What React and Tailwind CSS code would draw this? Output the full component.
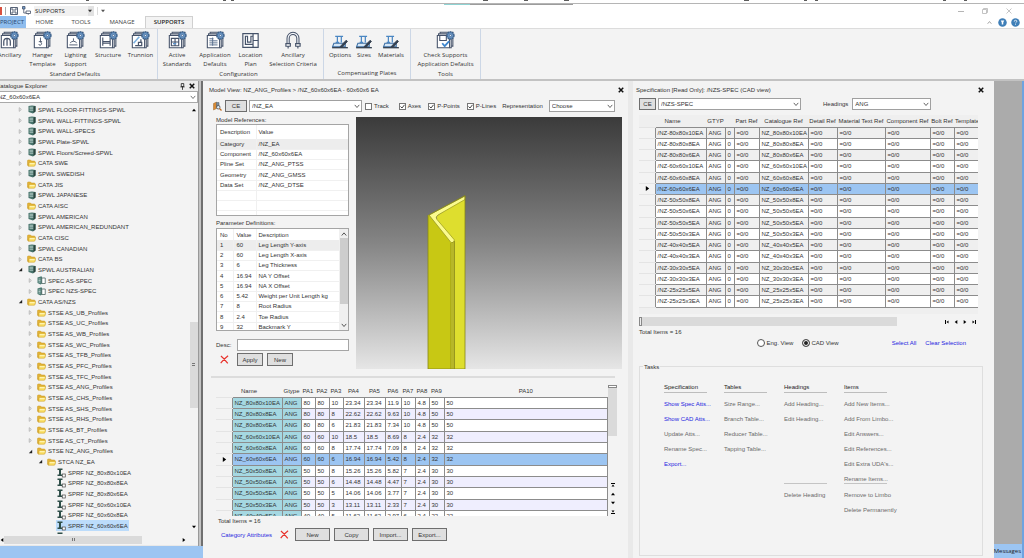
import React, { useState } from "react";
import clsx from "clsx";

const SIZES = [
  "80x80x10", "80x80x8", "80x80x6", "60x60x10", "60x60x8", "60x60x6", "50x50x8", "50x50x6",
  "50x50x5", "50x50x3", "40x40x5", "40x40x3", "30x30x5", "30x30x3", "25x25x5", "25x25x3",
];

const PARAM_ROWS = [
  ["80", "80", "10", "23.34", "23.34", "11.9", "10", "4.8", "50", "50"],
  ["80", "80", "8", "22.62", "22.62", "9.63", "10", "4.8", "50", "50"],
  ["80", "80", "6", "21.83", "21.83", "7.34", "10", "4.8", "50", "50"],
  ["60", "60", "10", "18.5", "18.5", "8.69", "8", "2.4", "32", "32"],
  ["60", "60", "8", "17.74", "17.74", "7.09", "8", "2.4", "32", "32"],
  ["60", "60", "6", "16.94", "16.94", "5.42", "8", "2.4", "32", "32"],
  ["50", "50", "8", "15.26", "15.26", "5.82", "7", "2.4", "30", "30"],
  ["50", "50", "6", "14.48", "14.48", "4.47", "7", "2.4", "30", "30"],
  ["50", "50", "5", "14.06", "14.06", "3.77", "7", "2.4", "30", "30"],
  ["50", "50", "3", "13.11", "13.11", "2.33", "7", "2.4", "30", "30"],
  ["40", "40", "5", "11.62", "11.62", "2.97", "6", "2.4", "22", "22"],
];

const PROFILES = ["UB", "UC", "WB", "WC", "TFB", "PFC", "TFC", "ANG", "CHS", "SHS", "RHS", "BT", "CT"];

const TREE = [
  { level: 0, icon: "world", label: "SPWL FLOOR-FITTINGS-SPWL" },
  { level: 0, icon: "world", label: "SPWL WALL-FITTINGS-SPWL" },
  { level: 0, icon: "world", label: "SPWL WALL-SPECS" },
  { level: 0, icon: "world", label: "SPWL Plate-SPWL" },
  { level: 0, icon: "world", label: "SPWL Floors/Screed-SPWL" },
  { level: 0, icon: "folder", label: "CATA SWE" },
  { level: 0, icon: "world", label: "SPWL SWEDISH" },
  { level: 0, icon: "folder", label: "CATA JIS" },
  { level: 0, icon: "world", label: "SPWL JAPANESE" },
  { level: 0, icon: "folder", label: "CATA AISC" },
  { level: 0, icon: "world", label: "SPWL AMERICAN" },
  { level: 0, icon: "world", label: "SPWL AMERICAN_REDUNDANT" },
  { level: 0, icon: "folder", label: "CATA CISC" },
  { level: 0, icon: "world", label: "SPWL CANADIAN" },
  { level: 0, icon: "folder", label: "CATA BS" },
  { level: 0, icon: "world", label: "SPWL AUSTRALIAN", open: true },
  { level: 1, icon: "spec", label: "SPEC AS-SPEC" },
  { level: 1, icon: "spec", label: "SPEC NZS-SPEC" },
  { level: 0, icon: "folder", label: "CATA AS/NZS", open: true },
  ...PROFILES.map((p) => ({ level: 1, icon: "folder", label: `STSE AS_${p}_Profiles` })),
  { level: 1, icon: "folder", label: "STSE NZ_ANG_Profiles", open: true },
  { level: 2, icon: "folder", label: "STCA NZ_EA", open: true },
  ...SIZES.slice(0, 7).map((s) => ({ level: 3, icon: "profile", label: `SPRF NZ_${s}EA`, leaf: true })),
];

const INDENT = ["pl-[18px]", "pl-7", "pl-[38px]", "pl-12"];

/* ---------- small icons ---------- */

const Triangle = ({ dir = "right", className = "size-[5px]" }) => {
  const paths = {
    right: "M1 0 5 3 1 6Z",
    left: "M5 0 1 3 5 6Z",
    up: "M0 5 3 1 6 5Z",
    down: "M0 1 3 5 6 1Z",
  };
  return (
    <svg viewBox="0 0 6 6" className={className} fill="currentColor">
      <path d={paths[dir]} />
    </svg>
  );
};

const Chevron = ({ up, className = "size-[6px]" }) => (
  <svg viewBox="0 0 8 8" className={className} fill="none" stroke="currentColor" strokeWidth="1.2">
    <path d={up ? "M1 6 4 2.5 7 6" : "M1 2.5 4 6 7 2.5"} />
  </svg>
);

const CloseIcon = () => (
  <svg viewBox="0 0 8 8" className="size-[6px]" stroke="#111" strokeWidth="2">
    <path d="M1 1 7 7M7 1 1 7" />
  </svg>
);

const RedCross = ({ className }) => (
  <svg viewBox="0 0 10 10" className={className} fill="none" stroke="#e8322c" strokeWidth="1.4">
    <path d="M1 1.2C4 3.5 6 6 8.6 9.2M9 .8C6 3 3.5 6 .8 9" />
  </svg>
);

const FolderIcon = () => (
  <svg viewBox="0 0 18 16" className="h-2 w-[9px]">
    <path d="M1 12V3.5Q1 2 2.5 2H7l2 2h5.500q1.500 0 1.500 1.500V12Z" fill="#e3b33a" stroke="#c99a22" />
    <path d="M3 14.500 4.200 6.500h13L16 13q-.3 1.500-2 1.500H4q-2 0-2.500-2.500Z" fill="#f9dd62" stroke="#c99a22" />
    <path d="M5.500 8h10l-.5 2.500H5Z" fill="#fff3b0" />
  </svg>
);

const WorldIcon = () => (
  <svg viewBox="0 0 16 18" className="h-[9px] w-2">
    <path d="M1 2 8 1l7 1v11l-5 4-9-3Z" fill="#47736b" />
    <path d="M3 4.5h8M3 7.5h8M3 10.5h8" stroke="#d5e6e2" strokeWidth="1.4" />
    <path d="M11 3v13l4-3V2Z" fill="#2b443f" />
  </svg>
);

const SpecIcon = () => (
  <svg viewBox="0 0 18 18" className="size-[9px]">
    <path d="M1 3 7 1h3v14l-3 2-6-3Z" fill="#4c7b73" />
    <path d="M3 6h4M3 9h4M3 12h4" stroke="#e2efec" strokeWidth="1.3" />
    <path d="M9.5 4h7v11h-7Z" fill="#fff" stroke="#3a5550" strokeWidth="1.4" />
  </svg>
);

const ProfileIcon = () => (
  <svg viewBox="0 0 18 20" className="h-[10px] w-[9px]">
    <path d="M1 1h10v3H8v9h3v3H1v-3h3V4H1Z" fill="#2f4f49" />
    <rect x="10.5" y="12" width="6" height="6" fill="#fff" stroke="#444" strokeWidth="1.4" />
  </svg>
);

const TREE_ICONS = { folder: FolderIcon, world: WorldIcon, spec: SpecIcon, profile: ProfileIcon };

/* ---------- ribbon icons ---------- */

const Gear = () => (
  <g>
    <circle cx="17.5" cy="5.5" r="4.3" fill="#7fa9d4" stroke="#3b5f88" strokeWidth="1.8" strokeDasharray="1.9 .8" />
    <circle cx="17.5" cy="5.5" r="3.6" fill="#6f9ccc" stroke="#3b5f88" strokeWidth=".8" />
    <circle cx="17.5" cy="5.5" r="1.3" fill="#e4eefa" stroke="#2d4d73" strokeWidth=".7" />
  </g>
);

const StackIcon = ({ children }) => (
  <svg viewBox="0 0 23 22" className="h-[18px] w-[19px]" fill="none" stroke="#46536a" strokeWidth="1.3">
    <path d="M5 3.5V1.5h15.5v17h-2" />
    <path d="M3 5.5v-2h15.5v17H16.5" fill="#fff" />
    <path d="M1.5 5.5h15v15h-15Z" fill="#fff" />
    {children}
    <Gear />
  </svg>
);

const PlateIcon = () => (
  <svg viewBox="0 0 20 16" className="h-[14px] w-[18px]" fill="none">
    <path d="M3 9.5h13v4H1.5l1.5-4Z" fill="#d5e7f7" stroke="#3c6fa5" strokeWidth="1.2" />
    <path d="M4.5 1.5h9M7 1.5v7M11.5 1.5v7M5 8.500h4" stroke="#4a86c2" strokeWidth="1.4" />
    <path d="M10 13.500 17 6l1.500 1.300-6 6.700Z" fill="#333f4f" stroke="#333f4f" />
    <path d="M1 14.500h18" stroke="#333f4f" strokeWidth="1.500" />
  </svg>
);

const RIBBON = [
  {
    title: "Standard Defaults",
    className: "-ml-[7px]",
    items: [
      {
        lines: ["Ancillary"], width: "w-[33px]",
        icon: <StackIcon><path d="M4.500 18v-5q0-4 4-4t4 4v5M8.500 9v9" strokeWidth="1.500" /></StackIcon>,
      },
      {
        lines: ["Hanger", "Template"], width: "w-[33px]",
        icon: <StackIcon><path d="M9 8v5M7 13h4M9 13q3 3 0 4.500-2 0-2-1.500" strokeWidth="1.100" /></StackIcon>,
      },
      {
        lines: ["Lighting", "Support"], width: "w-[33px]",
        icon: <StackIcon><path d="M4 17h10M5 14.500q4-4 8 0M9 9v3" strokeWidth="1.100" /></StackIcon>,
      },
      {
        lines: ["Structure"], width: "w-8",
        icon: <StackIcon><path d="M4.500 8v10M13.500 8v10M4.500 13h9M4.500 15h9" strokeWidth="1.400" /></StackIcon>,
      },
      {
        lines: ["Trunnion"], width: "w-[33px]",
        icon: <StackIcon><path d="M3 15 10 7" stroke="#7bb0df" strokeWidth="2" /><path d="M5 18h8v-4H9v4M12 10v4" strokeWidth="1.500" /></StackIcon>,
      },
    ],
  },
  {
    title: "Configuration",
    className: "pr-1",
    items: [
      {
        lines: ["Active", "Standards"], width: "w-[38px]",
        icon: <StackIcon><path d="M4 9h9v9H4ZM8.500 9v9M4 13.500h9" strokeWidth="1.400" /><path d="M6 15.500h4" stroke="#5b93cc" strokeWidth="1.600" /></StackIcon>,
      },
      {
        lines: ["Application", "Defaults"], width: "w-[38px]",
        icon: <StackIcon><path d="M4 9.500h5M4 12h10M4 14.500h10M4 17h10M8 8v10" stroke="#5d7391" strokeWidth="1.200" /></StackIcon>,
      },
      {
        lines: ["Location", "Plan"], width: "w-[33px]",
        icon: (
          <svg viewBox="0 0 22 20" className="h-[17px] w-[19px]" fill="none" stroke="#46536a" strokeWidth="1.400">
            <path d="M2 2h18v16H2Z" fill="#fff" />
            <path d="M5 5h2.500v7h4V5H14v9.500H5ZM14 10h6M14 2v3M14 14v4" />
          </svg>
        ),
      },
      {
        lines: ["Ancillary", "Selection Criteria"], width: "w-[52px]",
        icon: (
          <svg viewBox="0 0 18 20" className="h-[18px] w-4" fill="none" stroke="#46536a" strokeWidth="1.300">
            <path d="M3.500 15V8a5.500 5.500 0 0 1 11 0v7" strokeWidth="3.600" />
            <path d="M3.500 15V8a5.500 5.500 0 0 1 11 0v7" stroke="#f4f6fa" strokeWidth="1.300" />
            <path d="M1 14h5v3H1ZM12 14h5v3h-5ZM3.500 17v2.500M14.500 17v2.500" fill="#fff" />
          </svg>
        ),
      },
    ],
  },
  {
    title: "Compensating Plates",
    className: "px-1",
    items: [
      { lines: ["Options"], width: "w-6", icon: <PlateIcon /> },
      { lines: ["Sizes"], width: "w-6", icon: <PlateIcon /> },
      { lines: ["Materials"], width: "w-[30px]", icon: <PlateIcon /> },
    ],
  },
  {
    title: "Tools",
    className: "",
    items: [
      {
        lines: ["Check Supports", "Application Defaults"], width: "w-[69px]",
        icon: <StackIcon><path d="M4.500 5.500v6h8v-6" /><path d="m7.500 15 3 3.500 5.500-6" stroke="#3d86cf" strokeWidth="2.200" /></StackIcon>,
      },
    ],
  },
];

/* ---------- form controls ---------- */

const Select = ({ label, options, className }) => (
  <div className={clsx("relative h-3", className)}>
    <select aria-label={label} className="h-full w-full appearance-none border border-[#a0a0a0] bg-white pl-[2px] leading-[10px] outline-none">
      {options.map((o) => <option key={o}>{o}</option>)}
    </select>
    <Chevron className="pointer-events-none absolute top-[3px] right-[2px] size-[6px] text-[#555]" />
  </div>
);

const Check = ({ label, defaultChecked, className }) => (
  <label className={clsx("flex items-center gap-[2px] whitespace-nowrap", className)}>
    <span className="relative block size-[7px]">
      <input type="checkbox" defaultChecked={defaultChecked} className="peer block size-[7px] appearance-none border border-[#777] bg-white" />
      <svg viewBox="0 0 7 7" className="pointer-events-none absolute inset-0 hidden size-[7px] peer-checked:block" fill="none" stroke="#444">
        <path d="m1.500 3.500 1.500 1.500 2.500-3.200" />
      </svg>
    </span>
    {label}
  </label>
);

const Button = ({ children, className }) => (
  <button className={clsx("border border-[#6e6e6e] bg-[#dfdfdf] hover:bg-[#e8f1fb]", className)}>{children}</button>
);

/* ---------- header ---------- */

const TitleBar = () => (
  <div className="bg-white">
    <svg viewBox="0 0 1024 3" preserveAspectRatio="none" className="block h-[3px] w-full" stroke="#333" strokeWidth="2">
      <path d="M86 0h3M223 0h3M231 0h3M483 0h5M524 0h4M564 0h5M744 0h5M804 0h3M815 0h3M943 0h3M964 0h3" strokeOpacity=".8" />
    </svg>
    <div className="relative h-[2px] border-t border-[#b5b5b5]">
      <div className="absolute top-0 left-[444px] flex h-px w-[129px] bg-[#9c9c9c]">
        <div className="w-[26px] bg-[#8fd3d3]" />
      </div>
    </div>
    <div className="flex h-[11px] items-center font-['Open_Sans',sans-serif]">
      <span className="h-2 w-[2px] bg-[#d8503f]" />
      <span className="mr-1 ml-[3px] h-2 w-px bg-[#aaa]" />
      <svg viewBox="0 0 16 16" className="size-[8px]" fill="none" stroke="#46536a" strokeWidth="1.800">
        <path d="M1 1h14v14H1ZM4 1v5h8V1M4 15v-5h8v5" />
      </svg>
      <svg viewBox="0 0 18 18" className="mr-[3px] ml-[4px] size-[9px]" fill="none" stroke="#46536a" strokeWidth="1.600">
        <path d="M1 1h5v5H1Z" fill="#6f9ccc" />
        <path d="M3.500 6v8h5M8 10h9v5H8ZM12.500 15v2.500" />
      </svg>
      <div className="flex h-[10px] w-[60px] items-center justify-between bg-[#f1f1f1] pl-px text-[6px] leading-[10px] text-[#222]">
        SUPPORTS
        <span className="flex h-full w-[6px] items-center bg-[#e2e2e2] text-[#333]"><Triangle dir="down" className="size-[4px]" /></span>
      </div>
      <span className="mx-[3px] h-2 w-px bg-[#ddd]" />
      <Triangle dir="down" className="size-[4px] text-[#555]" />
      <div className="mr-[12px] ml-auto flex items-center gap-[18px] text-[#b5b5b5]">
        <button aria-label="Minimize"><svg viewBox="0 0 6 6" className="size-[6px]" stroke="currentColor"><path d="M0 3.500h6" /></svg></button>
        <button aria-label="Restore">
          <svg viewBox="0 0 6 6" className="size-[6px]" fill="none" stroke="currentColor" strokeWidth=".8"><path d="M.5 1.500h4v4h-4ZM1.500 1.500v-1h4v4h-1" /></svg>
        </button>
        <button aria-label="Close"><svg viewBox="0 0 6 6" className="size-[6px]" stroke="currentColor" strokeWidth=".8"><path d="M.5.5l5 5M5.500.5l-5 5" /></svg></button>
      </div>
    </div>
  </div>
);

const Tabs = () => (
  <nav className="flex h-3 items-stretch bg-white font-['Open_Sans',sans-serif] text-[6px] leading-3 text-[#444]">
    <button className="w-[26px] bg-[#8fbdee] pr-[3px] text-[#2a4a70]">PROJECT</button>
    <button className="w-[37px]">HOME</button>
    <button className="w-9">TOOLS</button>
    <button className="w-[46px]">MANAGE</button>
    <button className="w-12 border border-b-0 border-[#d0d0d0] bg-[#f3f3f3] font-semibold text-[#222] leading-[11px]">SUPPORTS</button>
    <div className="mr-1 ml-auto flex items-center gap-1">
      <Chevron up className="size-[5px] text-[#888]" />
      <svg viewBox="0 0 18 18" className="ml-[2px] size-[9px]">
        <circle cx="9" cy="9" r="8.500" fill="#3f7fb8" />
        <path d="M5.500 5h7l-2 4v4h-3V9Z" fill="#fff" />
      </svg>
      <svg viewBox="0 0 18 18" className="size-[9px]" fill="none">
        <circle cx="9" cy="9" r="8.500" fill="#3f7fb8" />
        <path d="M6.500 7.200Q6.500 4.500 9 4.500t2.500 2.300Q11.500 8.300 9 9.800M9 11.500v2" stroke="#fff" strokeWidth="1.600" />
      </svg>
    </div>
  </nav>
);

const Ribbon = () => (
  <div className="flex h-[53px] border-t border-b-2 border-t-[#dcdcdc] border-b-[#c2c2c2] bg-[#f3f3f3] font-['Open_Sans',sans-serif] text-[6px] leading-[9px] text-[#333]">
    {RIBBON.map((group) => (
      <section key={group.title} className={clsx("flex flex-col justify-between border-r border-[#ccd7e6] pt-[2px]", group.className)}>
        <div className="flex">
          {group.items.map((item) => (
            <button key={item.lines.join(" ")} className={clsx("flex flex-col items-center whitespace-nowrap", item.width)}>
              <span className="flex h-[18px] items-end">{item.icon}</span>
              <span className="mt-[2px] flex flex-col items-center">
                {item.lines.map((l) => <span key={l}>{l}</span>)}
              </span>
            </button>
          ))}
        </div>
        <div className="text-center leading-[11px]">{group.title}</div>
      </section>
    ))}
  </div>
);

/* ---------- left panel ---------- */

const CatalogueExplorer = () => (
  <aside className="flex min-h-0 min-w-0 flex-col bg-[#f3f3f3]">
    <div className="flex h-[10px] items-center bg-[#ececec] pr-[3px] leading-[10px]">
      <h2 className="-ml-1 flex-1">Catalogue Explorer</h2>
      <svg viewBox="0 0 6 8" className="mr-1 h-[7px] w-[5px]" fill="none" stroke="#222"><path d="M1.500.5h3v3.500h-3ZM.5 4.500h5M3 4.500V8" /></svg>
      <CloseIcon />
    </div>
    <div className="relative">
      <select aria-label="Current element" className="block h-3 w-full appearance-none border border-[#a9a9a9] border-l-0 bg-white leading-[10px] indent-[-2px] outline-none">
        <option>NZ_60x60x6EA</option>
      </select>
      <Chevron className="pointer-events-none absolute top-[3px] right-[2px] size-[6px] text-[#666]" />
    </div>
    <div className="flex min-h-0 flex-1">
      <ul className="min-w-0 flex-1 overflow-hidden pt-px">
        {TREE.map((node) => {
          const Icon = TREE_ICONS[node.icon];
          const selected = node.label === "SPRF NZ_60x60x6EA";
          return (
            <li key={node.label} className={clsx("flex h-[11px] items-center nth-[3n]:h-[10px]", INDENT[node.level])}>
              <span className="w-2 shrink-0">
                {!node.leaf && (node.open
                  ? <svg viewBox="0 0 6 6" className="size-[5px]"><path d="M5 1v4H1Z" fill="#222" /></svg>
                  : <svg viewBox="0 0 6 6" className="size-[5px]" fill="none" stroke="#b0b0b0"><path d="M1.500.8 4 3 1.500 5.200Z" /></svg>)}
              </span>
              <span className={clsx("flex h-full items-center whitespace-nowrap pr-px", selected && "bg-[#bcdcfb]")}>
                <span className="flex w-[11px] justify-center"><Icon /></span>
                <span className="ml-px">{node.label}</span>
              </span>
            </li>
          );
        })}
      </ul>
      <div className="flex w-[9px] flex-col items-center justify-between py-[5px]">
        <Triangle dir="up" className="size-[4px] text-black" />
        <div className="mt-[92px] flex h-[86px] w-2 items-center justify-center bg-[#dadada]">
          <span className="h-[3px] w-[3px] border-y border-[#777]" />
        </div>
        <Triangle dir="down" className="size-[4px] text-black" />
      </div>
    </div>
    <div className="flex h-[11px] items-center pr-[12px] leading-none">
      <span className="w-[4px]"><Triangle dir="left" className="size-[4px] text-black" /></span>
      <div className="flex h-2 w-[138px] items-center justify-center bg-[#dadada]">
        <span className="h-[3px] w-[3px] border-x border-[#777]" />
      </div>
      <Triangle className="ml-auto size-[4px] text-black" />
    </div>
    <div className="-mr-[5px] h-[13px] border-t border-[#e8e8e8] bg-[#9cc5f2]" />
  </aside>
);

/* ---------- model view ---------- */

const ModelReferences = () => (
  <div className="h-[92px] overflow-hidden border border-[#a5a5a5] bg-white">
    <table className="w-full table-fixed border-collapse text-left">
      <colgroup><col className="w-[39px]" /><col /></colgroup>
      <thead>
        <tr className="h-[14px]">
          <th className="border-r border-[#f0f0f0] pl-[3px] font-normal">Description</th>
          <th className="pl-[2px] font-normal">Value</th>
        </tr>
      </thead>
      <tbody>
        {[
          ["Category", "/NZ_EA"], ["Component", "/NZ_60x60x6EA"], ["Pline Set", "/NZ_ANG_PTSS"],
          ["Geometry", "/NZ_ANG_GMSS"], ["Data Set", "/NZ_ANG_DTSE"], ["", ""], ["", ""], ["", ""],
        ].map(([name, value], i) => (
          <tr key={i} className="h-[10px] border-b border-[#f0f0f0] first:bg-[#ededed] nth-[4n]:h-[11px]">
            <td className="border-r border-[#f0f0f0] pl-[3px]">{name}</td>
            <td className="pl-[2px]">{value}</td>
          </tr>
        ))}
      </tbody>
    </table>
  </div>
);

const ParameterDefinitions = () => (
  <div className="flex h-[103px] overflow-hidden border border-[#a5a5a5] bg-white">
    <table className="w-full table-fixed self-start border-collapse text-left">
      <colgroup><col className="w-4" /><col className="w-[23px]" /><col /></colgroup>
      <thead>
        <tr className="h-[11px]">
          <th className="border-r border-[#f0f0f0] pl-[3px] font-normal">No</th>
          <th className="border-r border-[#f0f0f0] pl-[3px] font-normal">Value</th>
          <th className="pl-[2px] font-normal">Description</th>
        </tr>
      </thead>
      <tbody>
        {[
          ["60", "Leg Length Y-axis"], ["60", "Leg Length X-axis"], ["6", "Leg Thickness"], ["16.94", "NA Y Offset"],
          ["16.94", "NA X Offset"], ["5.42", "Weight per Unit Length kg"], ["8", "Root Radius"], ["2.4", "Toe Radius"], ["32", "Backmark Y"],
        ].map(([value, desc], i) => (
          <tr key={desc} className="h-[10px] border-b border-[#f0f0f0] first:bg-[#ededed] nth-[4n]:h-[11px]">
            <td className="border-r border-[#f0f0f0] pl-[3px]">{i + 1}</td>
            <td className="border-r border-[#f0f0f0] pl-[3px]">{value}</td>
            <td className="whitespace-nowrap pl-[2px]">{desc}</td>
          </tr>
        ))}
      </tbody>
    </table>
    <div className="flex w-[9px] shrink-0 flex-col items-center bg-[#f0f0f0] py-[2px] text-[#444]">
      <Chevron up className="size-[6px]" />
      <div className="mt-px h-[66px] w-2 bg-[#cdcdcd]" />
      <Chevron className="mt-auto size-[6px]" />
    </div>
  </div>
);

const Viewer = () => (
  <div className="min-w-0 flex-1 bg-gradient-to-b from-[#3b3b3b] via-[#858585] to-[#e6e6e6]">
    <svg viewBox="0 0 266 252" className="block h-[252px] w-full">
      <path d="M73 98 95 125V252H72V98Z" fill="#c8c814" />
      <path d="M109 80V252H98V124L81 104V99Z" fill="#dede2e" />
      <path d="M95 124h3.500V252H95Z" fill="#d8d832" />
      <path d="M73 98 109 79v3.500L82 98q-3 2-1 4.500L98.500 123l-1.500 2.500-2 0Z" fill="#fbfb8e" stroke="#96961a" strokeWidth=".7" />
      <path d="M73 98 109 78.500V252M72 98V252M95 126V252M97 125V252M98.500 124V252M72 252h37" fill="none" stroke="#85851a" strokeWidth=".8" />
    </svg>
  </div>
);

const PA_COLS = ["PA1", "PA2", "PA3", "PA4", "PA5", "PA6", "PA7", "PA8", "PA9", "PA10"];
const cell = "border border-[#8c8c8c] pl-[2px]";

const ParameterTable = () => {
  const [current, setCurrent] = useState(5);
  return (
    <div className="ml-[7px] flex h-[131px] overflow-hidden">
      <table className="min-w-0 flex-1 table-fixed self-start border-collapse whitespace-nowrap text-left">
        <colgroup>
          <col className="w-4" /><col className="w-[50px]" /><col className="w-[19px]" />
          <col className="w-[14px]" /><col className="w-[14px]" /><col className="w-[14px]" />
          <col className="w-[21px]" /><col className="w-[21px]" /><col className="w-4" />
          <col className="w-[14px]" /><col className="w-[14px]" /><col className="w-[15px]" /><col />
        </colgroup>
        <thead>
          <tr className="h-3 text-center">
            <th />
            <th className="pr-4 font-normal">Name</th>
            <th className="font-normal">Gtype</th>
            {PA_COLS.map((c) => <th key={c} className="font-normal">{c}</th>)}
          </tr>
        </thead>
        <tbody>
          {PARAM_ROWS.map((row, i) => (
            <tr
              key={i}
              onClick={() => setCurrent(i)}
              className={clsx("h-[11px] nth-[3n]:h-3", i === current ? "bg-[#9cc5f2]" : "bg-white even:bg-[#efeefe]")}
            >
              <td className="border-y border-[#e4e4e4] bg-[#f3f3f3] pl-[6px]">{i === current && <Triangle className="size-[5px] text-black" />}</td>
              <td className={clsx(cell, i !== current && "bg-[#a5d8e2]")}>NZ_{SIZES[i]}EA</td>
              <td className={clsx(cell, i !== current && "bg-[#a5d8e2]")}>ANG</td>
              {row.map((v, n) => <td key={n} className={cell}>{v}</td>)}
            </tr>
          ))}
        </tbody>
      </table>
      <div className="flex w-[9px] flex-col items-center text-black">
        <div className="h-[3px] w-[9px] border border-[#888] bg-white" />
        <div className="h-12 w-[9px] bg-[#dadada]" />
        <div className="mt-auto mb-[2px] flex flex-col items-center gap-[5px]">
          <Triangle dir="up" className="size-[4px] border-t border-black" />
          <Triangle dir="up" className="size-[4px]" />
          <Triangle dir="down" className="size-[4px]" />
          <Triangle dir="down" className="size-[4px] border-b border-black" />
        </div>
      </div>
    </div>
  );
};

const ModelView = () => (
  <main className="flex min-w-0 flex-col bg-[#f3f3f3] px-[6px] pt-[4px]">
    <div className="flex h-[10px] items-center justify-between">
      <h2>Model View: NZ_ANG_Profiles &gt; /NZ_60x60x6EA - 60x60x6 EA</h2>
      <button aria-label="Close model view" className="-mr-[2px]"><CloseIcon /></button>
    </div>
    <div className="mt-[5px] flex items-center pl-[3px]">
      <svg viewBox="0 0 20 20" className="size-[10px]" fill="none">
        <path d="M3 5 9 2v13l-6 3Z" fill="#d98a35" stroke="#9a6a2c" />
        <path d="M9 3h5v10H9Z" fill="#7b8ea0" stroke="#4c5a66" />
        <circle cx="12.500" cy="12.500" r="3.500" stroke="#444" strokeWidth="1.500" fill="#dcebf7" />
        <path d="m15 15 4 4" stroke="#c0691e" strokeWidth="2.500" />
      </svg>
      <Button className="ml-[3px] h-3 w-[22px]">CE</Button>
      <Select label="Category" options={["/NZ_EA"]} className="ml-[2px] w-[113px]" />
      <Check label="Track" className="ml-[3px]" />
      <div className="ml-[10px] flex items-center gap-[7px]">
        <Check label="Axes" defaultChecked />
        <Check label="P-Points" defaultChecked />
        <Check label="P-Lines" defaultChecked />
      </div>
      <span className="ml-[6px]">Representation</span>
      <Select label="Representation" options={["Choose"]} className="ml-[6px] w-[66px]" />
    </div>

    <div className="mt-[5px] flex gap-[7px] pl-[7px]">
      <div className="w-[133px] shrink-0">
        <h3 className="h-[7px] leading-[7px]">Model References:</h3>
        <ModelReferences />
        <h3 className="mt-[3px] h-[9px] leading-[9px]">Parameter Definitions:</h3>
        <ParameterDefinitions />
        <div className="mt-2 flex items-center">
          <label htmlFor="desc" className="w-[21px]">Desc:</label>
          <input id="desc" className="h-3 min-w-0 flex-1 border border-[#a5a5a5] bg-white outline-none" />
        </div>
        <div className="mt-[2px] flex items-center gap-1 pl-1">
          <button aria-label="Delete" className="mr-[4px]"><RedCross className="size-[9px]" /></button>
          <Button className="h-[13px] w-[26px]">Apply</Button>
          <Button className="h-[13px] w-[26px]">New</Button>
        </div>
      </div>
      <Viewer />
    </div>

    <hr className="mt-[7px] mr-[7px] ml-[2px] border-t-2 border-[#dcdcdc]" />
    <div className="mt-[7px] mr-[5px]"><ParameterTable /></div>
    <div className="mt-px ml-[9px] leading-[8px]">Total Items = 16</div>
    <div className="mt-[3px] flex items-center pl-3">
      <button className="text-[#2a2ae0]">Category Attributes</button>
      <button aria-label="Delete row" className="mr-[6px] ml-2"><RedCross className="size-[9px]" /></button>
      <div className="flex gap-[4px]">
        {["New", "Copy", "Import...", "Export..."].map((b) => <Button key={b} className="h-[13px] w-[35px]">{b}</Button>)}
      </div>
    </div>
  </main>
);

/* ---------- specification ---------- */

const SpecTable = () => {
  const [current, setCurrent] = useState(5);
  const ref = "=0/0";
  return (
    <table className="w-full table-fixed border-collapse whitespace-nowrap text-left">
      <colgroup>
        <col className="w-4" /><col className="w-[51px]" /><col className="w-[19px]" /><col className="w-[9px]" />
        <col className="w-[25px]" /><col className="w-[49px]" /><col className="w-[29px]" /><col className="w-12" />
        <col className="w-[45px]" /><col className="w-6" /><col />
      </colgroup>
      <thead>
        <tr className="h-3">
          <th />
          <th className="pr-4 text-center font-normal">Name</th>
          <th className="text-center font-normal">GTYP</th>
          <th />
          {["Part Ref", "Catalogue Ref", "Detail Ref", "Material Text Ref", "Component Ref", "Bolt Ref"].map((h) => (
            <th key={h} className="text-center font-normal">{h}</th>
          ))}
          <th className="pl-px font-normal">Template</th>
        </tr>
      </thead>
      <tbody>
        {SIZES.map((s, i) => (
          <tr
            key={s}
            onClick={() => setCurrent(i)}
            className={clsx("h-[11px] nth-[4n]:h-3", i === current ? "bg-[#9cc5f2]" : "bg-[#efefef] even:bg-white")}
          >
            <td className="border-y border-[#e4e4e4] bg-[#f3f3f3] pl-[6px]">{i === current && <Triangle className="size-[5px] text-black" />}</td>
            <td className={cell}>/NZ-{s}EA</td>
            <td className={cell}>ANG</td>
            <td className={cell}>0</td>
            <td className={cell}>{ref}</td>
            <td className={cell}>NZ_{s}EA</td>
            <td className={cell}>{ref}</td>
            <td className={cell}>{ref}</td>
            <td className={cell}>{ref}</td>
            <td className={cell}>{ref}</td>
            <td className="border border-r-0 border-[#8c8c8c] pl-[2px]">{ref}</td>
          </tr>
        ))}
      </tbody>
    </table>
  );
};

const TASKS = [
  { title: "Specification", items: ["Show Spec Atts...", "Show CAD Atts...", "Update Atts...", "Rename Spec...", "Export..."] },
  { title: "Tables", items: ["Size Range...", "Branch Table...", "Reducer Table...", "Tapping Table..."] },
  { title: "Headings", items: ["Add Heading...", "Edit Heading..."], more: ["Delete Heading"] },
  {
    title: "Items",
    items: ["Add New Items...", "Add From Limbo...", "Edit Answers...", "Edit References...", "Edit Extra UDA's...", "Rename Items..."],
    more: ["Remove to Limbo", "Delete Permanently"],
  },
];
const ENABLED = ["Show Spec Atts...", "Show CAD Atts...", "Export..."];

const TaskList = ({ items, className }) => (
  <ul className={clsx("flex flex-col gap-[5px] leading-[10px]", className)}>
    {items.map((t) => (
      <li key={t} className="h-[10px]">
        <button disabled={!ENABLED.includes(t)} className="block whitespace-nowrap text-[#2424e0] disabled:text-[#6a6a6a]">{t}</button>
      </li>
    ))}
  </ul>
);

const Specification = () => (
  <section className="flex min-w-0 flex-col bg-[#f3f3f3] pt-[4px] pr-[11px] pb-[2px] pl-[6px]">
    <div className="-mr-[1px] -ml-[3px] flex h-[10px] items-center justify-between">
      <h2>Specification [Read Only]: /NZS-SPEC (CAD view)</h2>
      <button aria-label="Close specification"><CloseIcon /></button>
    </div>
    <div className="mt-[3px] flex items-center">
      <Button className="h-3 w-[17px]">CE</Button>
      <Select label="Specification" options={["/NZS-SPEC"]} className="ml-[2px] w-[143px]" />
      <span className="ml-[22px]">Headings</span>
      <Select label="Headings" options={["ANG"]} className="ml-1 w-[79px]" />
    </div>
    <div className="mt-[5px] mr-[5px] bg-[#efefef] pb-[6px]">
      <div className="overflow-hidden"><SpecTable /></div>
    </div>
    <div className="mt-[3px] mr-[5px] flex h-[10px] items-center justify-between pr-[2px]">
      <div className="h-[9px] w-[258px] bg-[#dadada]"><div className="h-full w-[3px] border border-[#888] bg-[#eee]" /></div>
      <div className="flex gap-[5px] text-black">
        <Triangle dir="left" className="size-[4px] border-l border-black" />
        <Triangle dir="left" className="size-[4px]" />
        <Triangle className="size-[4px]" />
        <Triangle className="size-[4px] border-r border-black" />
      </div>
    </div>
    <div className="h-[10px] leading-[10px]">Total Items = 16</div>
    <div className="mt-[2px] flex items-center justify-end gap-[9px] pr-[17px]">
      {["Eng. View", "CAD View"].map((v, i) => (
        <label key={v} className="flex items-center gap-px">
          <input type="radio" name="view" defaultChecked={i === 1} className="size-2 appearance-none rounded-full border border-[#555] bg-white checked:bg-[#222] checked:shadow-[inset_0_0_0_1px_white]" />
          {v}
        </label>
      ))}
      <button className="ml-11 text-[#2424e0]">Select All</button>
      <button className="text-[#2424e0]">Clear Selection</button>
    </div>
    <fieldset className="mt-4 min-w-0 flex-1 border border-[#dedede]">
      <legend className="ml-[3px] px-px leading-[8px]">Tasks</legend>
      <div className="flex gap-[17px] pt-[11px] pl-6">
        {TASKS.map((col) => (
          <div key={col.title} className="flex w-[43px] flex-col">
            <h4 className="border-b border-[#bdbdbd] leading-[10px] text-[#222]">{col.title}</h4>
            <TaskList items={col.items} className="mt-[6px] h-[84px]" />
            {col.more && <TaskList items={col.more} className="border-t border-[#c4c4c4] pt-[6px]" />}
          </div>
        ))}
      </div>
    </fieldset>
  </section>
);

/* ---------- app ---------- */

const App = () => (
  <div className="flex h-screen flex-col overflow-hidden bg-white font-['Liberation_Sans',Arial,sans-serif] text-[6px] leading-[8px] text-[#333]">
    <header>
      <TitleBar />
      <Tabs />
      <Ribbon />
    </header>
    <div className="grid min-h-0 flex-1 grid-cols-[198px_5px_425fr_5px_361fr_28px_2px]">
      <CatalogueExplorer />
      <div className="mb-3 border-r-2 border-l border-r-[#6f6f6f] border-l-[#999] bg-[#c4c4c4]" />
      <ModelView />
      <div className="bg-[#e9e9e9]" />
      <Specification />
      <div className="flex min-w-0 flex-col bg-[#ababab]">
        <div className="mt-auto flex h-[14px] items-center justify-end bg-[#9cc5f2] pr-px font-['Open_Sans',sans-serif] text-[6px] text-[#222]">Messages</div>
      </div>
      <div className="bg-[#6ea3e0]" />
    </div>
  </div>
);

export default App;
